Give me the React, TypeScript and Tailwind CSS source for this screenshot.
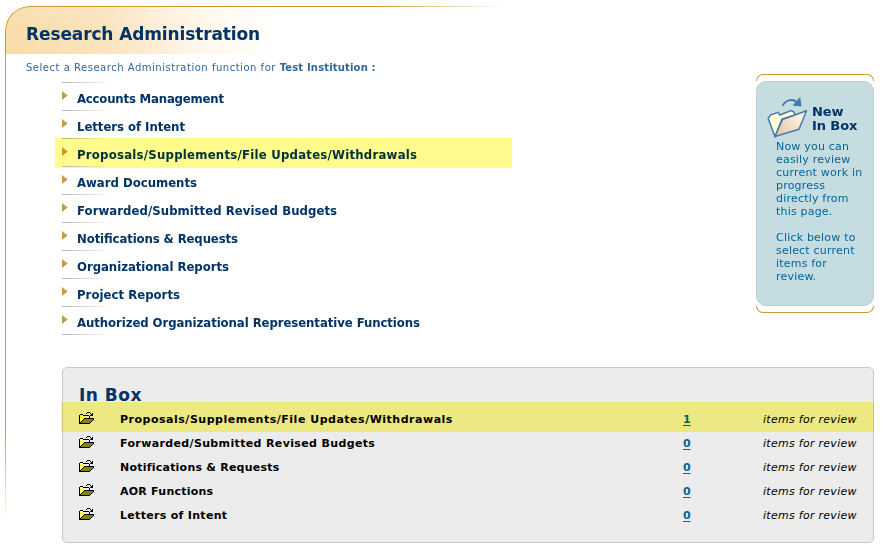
import React from "react";

const functions = [
  { label: "Accounts Management", width: "w-[147px]" },
  { label: "Letters of Intent", width: "w-[108px]" },
  { label: "Proposals/Supplements/File Updates/Withdrawals", width: "w-[340px]", marked: true },
  { label: "Award Documents", width: "w-[120px]" },
  { label: "Forwarded/Submitted Revised Budgets", width: "w-[260px]" },
  { label: "Notifications & Requests", width: "w-[161px]" },
  { label: "Organizational Reports", width: "w-[152px]" },
  { label: "Project Reports", width: "w-[103px]" },
  { label: "Authorized Organizational Representative Functions", width: "w-[343px]" },
];

const inbox = [
  { label: "Proposals/Supplements/File Updates/Withdrawals", count: 1, tracking: "tracking-[0.51px]" },
  { label: "Forwarded/Submitted Revised Budgets", count: 0, tracking: "tracking-[0.36px]" },
  { label: "Notifications & Requests", count: 0, tracking: "tracking-[0.23px]" },
  { label: "AOR Functions", count: 0, tracking: "tracking-[0.24px]" },
  { label: "Letters of Intent", count: 0, tracking: "tracking-[0.31px]" },
];

function SmallFolder() {
  return (
    <svg width="15" height="13" viewBox="0 0 15 13" shapeRendering="crispEdges" className="block">
      <path d="M1 4h3v1h6v3H6v1H5v1H4v1H3v1H1z" fill="#ffff63" />
      <path d="M5 7h9v1h-1v1h-1v1h-1v1H2v-1h1V9h1V8h1z" fill="#848400" />
      <path d="M1 2h3v1H1zM0 3h1v8H0zM4 3h6v1H4zM10 4h1v2h-1zM5 6h10v1H5zM4 7h1v1H4zM3 8h1v1H3zM2 9h1v1H2zM1 10h1v1H1zM0 11h11v1H0zM14 7h1v1h-1zM13 8h1v1h-1zM12 9h1v1h-1zM11 10h1v1h-1z" fill="#000" />
      <path d="M7 1h1v1H7zM8 0h3v1H8zM11 1h1v1h-1zM13 1h1v3h-1zM11 3h2v1h-2zM12 2h1v1h-1z" fill="#000" />
    </svg>
  );
}

function LargeFolder() {
  return (
    <svg width="42" height="42" viewBox="0 0 42 42" fill="none" className="block shrink-0">
      <defs>
        <linearGradient id="paper" x1="36" y1="16" x2="12" y2="37" gradientUnits="userSpaceOnUse">
          <stop stopColor="#fff9ee" />
          <stop offset="1" stopColor="#e7cba6" />
        </linearGradient>
      </defs>
      <path d="M8 40.5 1.2 22.5 3.3 19 11 16.3 13 19 24 14.5 27 16 28 19 15 23Z" fill="#ffffda" stroke="#477aaa" strokeWidth="1.5" />
      <path d="m8 40.5 7.5-17 24-8.7L32 33.2Z" fill="url(#paper)" stroke="#477aaa" strokeWidth="1.5" strokeLinejoin="round" />
      <path d="M15.5 9.7C19 3.5 26.5 1.5 31.5 8" stroke="#477aaa" strokeWidth="1.8" />
      <path d="M32.8 1.8 34 10 26.5 9.2Z" fill="#477aaa" stroke="#477aaa" />
    </svg>
  );
}

export default function App() {
  return (
    <div className="relative flex h-[554px] w-[884px] flex-col overflow-hidden bg-white font-['DejaVu_Sans',Verdana,sans-serif] text-[#003366]">
      <div className="pointer-events-none absolute top-[6px] left-[5px] z-10 h-[516px] w-[500px] rounded-tl-[25px] border-t border-l border-[#cc9933] [mask-composite:intersect] [mask-image:linear-gradient(to_right,black_370px,transparent_500px),linear-gradient(to_bottom,black_420px,transparent_516px)]" />

      <header className="mt-[6px] ml-[5px] flex h-12 w-[500px] items-center rounded-tl-[25px] bg-[linear-gradient(to_bottom,rgba(255,255,255,.12),transparent_50%),linear-gradient(to_right,#f8dcaa,#fae3bd_100px,#fef5e7_185px,white_270px)] pl-[21px]">
        <h1 className="mt-[7px] text-[17px] leading-6 font-bold tracking-[-0.12px] whitespace-nowrap">Research Administration</h1>
      </header>

      <div className="flex h-[313px] justify-between pr-[10px]">
        <main>
          <p className="mt-[6px] ml-[26px] h-4 text-[10px] leading-4 tracking-[0.52px] whitespace-nowrap text-[#336699]">
            Select a Research Administration function for <b className="tracking-[0.17px]">Test Institution :</b>
          </p>
          <ul className="mt-[6px] ml-[62px]">
            {functions.map((item) => (
              <li key={item.label} className="relative flex h-7 items-start">
                <i className="absolute top-0 left-0 h-px w-12 bg-linear-to-r from-[#b5b5b5] to-transparent" />
                <svg width="6" height="9" viewBox="0 0 6 9" className="mt-[9px] shrink-0">
                  <path d="M0 0 5.7 4.5 0 9Z" fill="#cc9944" />
                </svg>
                <svg height="20" className={`${item.width} mt-[7px] ml-[9px] shrink-0 overflow-visible`}>
                  <text x="0" y="14" textLength="100%" lengthAdjust="spacing" fill="#003366" className="font-['DejaVu_Sans_Condensed','DejaVu_Sans',sans-serif] text-[13px] font-bold [font-stretch:condensed]">
                    {item.label}
                  </text>
                </svg>
                {item.marked && <i className="absolute top-0 -left-[7px] h-[30px] w-[457px] bg-[#fffb8c] mix-blend-multiply" />}
              </li>
            ))}
          </ul>
          <i className="ml-[62px] block h-px w-12 bg-linear-to-r from-[#b5b5b5] to-transparent" />
        </main>

        <aside className="mt-5 flex w-[118px] flex-col">
          <div className="h-[7px] rounded-t-[8px] border-x border-t border-[#cc9933]" />
          <section className="h-[225px] rounded-[10px] border border-[#c5cdd0] bg-[#c5dce0]">
            <div className="flex pt-[14px] pl-[10px]">
              <LargeFolder />
              <h2 className="mt-[9px] ml-[3px] text-[13px] leading-[14px] font-bold tracking-[-0.1px] whitespace-nowrap">New<br />In Box</h2>
            </div>
            <div className="mt-[2px] pl-[19px] text-[11px] leading-[13px] tracking-[0.2px] whitespace-nowrap text-[#006699]">
              <p>Now you can<br />easily review<br />current work in<br />progress<br />directly from<br />this page.</p>
              <p className="mt-[13px]">Click below to<br />select current<br />items for<br />review.</p>
            </div>
          </section>
          <div className="h-[7px] rounded-b-[8px] border-x border-b border-[#cc9933]" />
        </aside>
      </div>

      <section className="relative ml-[62px] h-[176px] w-[812px] rounded-[5px] border border-[#c8c8c8] bg-[#ececec]">
        <h2 className="mt-[16px] ml-4 h-[22px] text-[17px] leading-[22px] font-bold tracking-[0.5px]">In Box</h2>
        <ul className="mt-px text-[11px] text-black">
          {inbox.map((item) => (
            <li key={item.label} className="flex h-6 items-center">
              <div className="mb-px ml-4 w-[41px]"><SmallFolder /></div>
              <b className={`${item.tracking} mt-[2px] w-[548px] whitespace-nowrap`}>{item.label}</b>
              <a className="mt-[2px] w-[95px] pl-[15px] font-bold text-[#006699] underline underline-offset-2">{item.count}</a>
              <i className="mt-[2px] tracking-[0.28px] whitespace-nowrap">items for review</i>
            </li>
          ))}
        </ul>
        <i className="absolute top-[34px] -left-[2px] h-[30px] w-[813px] bg-[#fffb8c] mix-blend-multiply" />
      </section>
    </div>
  );
}
